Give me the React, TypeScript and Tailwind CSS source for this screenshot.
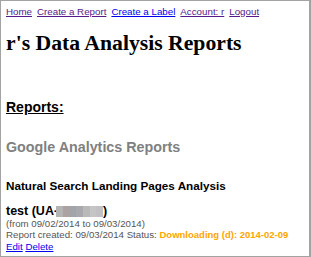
import React from "react";

const navLinks = [
  { label: "Home", visited: true },
  { label: "Create a Report", visited: true },
  { label: "Create a Label", visited: false },
  { label: "Account: r", visited: true },
  { label: "Logout", visited: true },
];

const blurCells = ["#b4b4b4", "#aba3a3", "#a1a5a9", "#a9a9ad", "#b9b9b9", "#c5c5c5", "#c1c1c5"];

export default function App() {
  return (
    <div className="h-[257px] w-[311px] overflow-hidden border border-r-2 border-[#a3a3a3] bg-white pl-[5px] pt-[4.6px] font-['Liberation_Sans',Arial,sans-serif]">
      {/* top nav */}
      <div className="flex gap-[5px] text-[9.75px] leading-[12px]">
        {navLinks.map((l) => (
          <a key={l.label} href="#" className={`underline ${l.visited ? "text-[#551a8b]" : "text-[#0000ee]"}`}>
            {l.label}
          </a>
        ))}
      </div>

      <h1 className="mt-[12px] font-['Liberation_Serif','Times_New_Roman',serif] text-[21.7px] font-bold leading-[26px] text-black">
        r's Data Analysis Reports
      </h1>

      <h2 className="mt-[43px] text-[14px] font-bold leading-[16px] text-black underline">Reports:</h2>

      <h3 className="mt-[24px] text-[14.3px] font-bold leading-[16px] text-[#808080]">Google Analytics Reports</h3>

      <h4 className="mt-[24.5px] text-[11.7px] font-bold leading-[14px] text-black">Natural Search Landing Pages Analysis</h4>

      <div className="mt-[10.7px] text-[12.5px] font-bold leading-[14px] text-black">
        test (UA-
        <span className="-ml-[2px] inline-flex h-[11px] w-[47px] align-[-2px]">
          {blurCells.map((c, i) => (
            <span key={i} className="h-full flex-1" style={{ backgroundColor: c }} />
          ))}
        </span>
        )
      </div>

      <div className="text-[9.7px] leading-[11.5px] text-[#555]">
        <div>(from 09/02/2014 to 09/03/2014)</div>
        <div>
          Report created: 09/03/2014 Status:{" "}
          <span className="text-[9.5px] font-bold text-[#ffa500]">Downloading (d): 2014-02-09</span>
        </div>
        <div>
          <a href="#" className="text-[#0000ee] underline">Edit</a>{" "}
          <a href="#" className="text-[#0000ee] underline">Delete</a>
        </div>
      </div>
    </div>
  );
}
